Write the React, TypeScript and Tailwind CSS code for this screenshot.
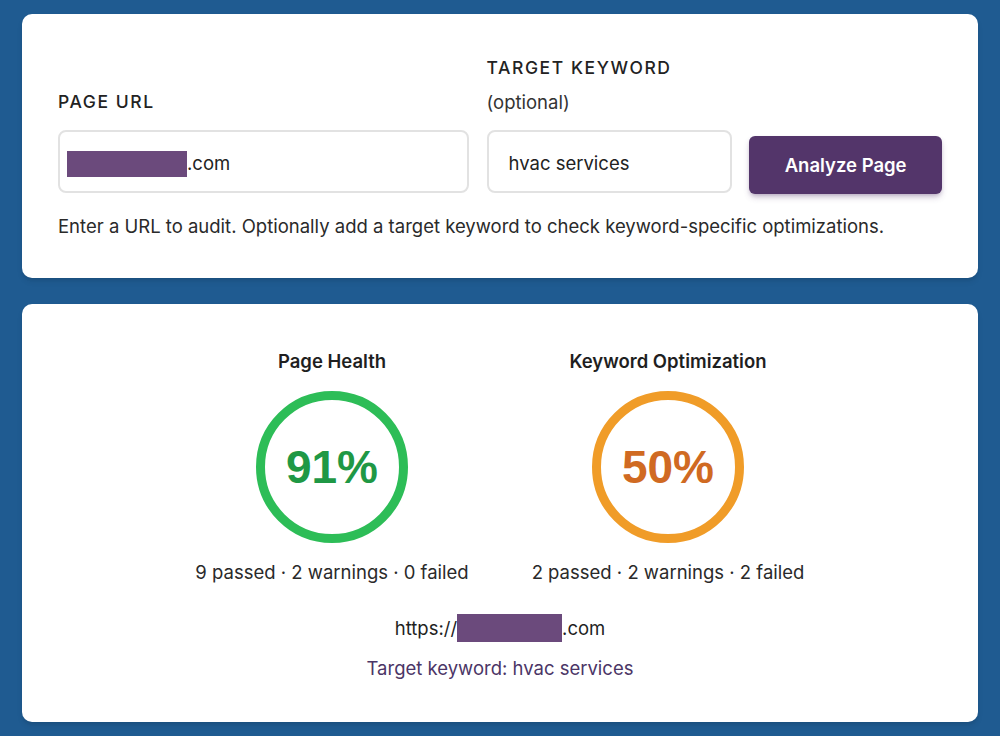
import React from 'react';

// --- Score ring ---
const ScoreRing = ({ title, score, stats, ring, text }: { title: string, score: string, stats: string, ring: string, text: string }) => (
  <div className="flex w-[300px] flex-col items-center">
    <h3 className="text-[18.5px] font-semibold leading-6 text-[#1f1f1f]">{title}</h3>
    <div className={`mt-[18px] flex h-[152px] w-[152px] items-center justify-center rounded-full border-[9px] ${ring}`}>
      <span className={`font-['Liberation_Sans',Arial,sans-serif] text-[46px] font-bold leading-none ${text}`}>{score}</span>
    </div>
    <p className="mt-[17px] text-[18.5px] leading-6 text-[#2a2a2a]">{stats}</p>
  </div>
);

export default function App() {
  return (
    <div className="min-h-[736px] bg-[#1f5b91] px-[22px] pt-[14px] pb-4 font-['Inter','Noto_Sans',sans-serif]">
      {/* --- Audit form --- */}
      <div className="rounded-[10px] bg-white px-9 pt-[42px] pb-[40px] shadow-md">
        <div className="flex items-end">
          <div className="w-[411px]">
            <label className="block text-[17.5px] font-medium uppercase leading-6 tracking-[0.09em] text-[#222]">Page URL</label>
            <div className="mt-[16px] flex h-[63px] items-center rounded-lg border-2 border-[#e2e2e2] pt-[4px] pl-[7px] text-[18.5px] text-[#222]">
              <span className="h-[26px] w-[120px] bg-[#6b4a7c]" />
              <span>.com</span>
            </div>
          </div>
          <div className="ml-[18px] w-[246px]">
            <label className="block text-[17.5px] font-medium uppercase leading-6 tracking-[0.09em] text-[#222]">Target Keyword</label>
            <span className="mt-[10px] block text-[18.5px] leading-6 text-[#333]">(optional)</span>
            <input
              readOnly
              value="hvac services"
              className="mt-[16px] h-[63px] w-full rounded-lg border-2 border-[#e2e2e2] px-[20px] pt-[3px] text-[18.5px] text-[#222] outline-none"
            />
          </div>
          <button className="mb-[-1px] ml-[17px] h-[58px] w-[193px] rounded-md bg-[#53356a] pt-[2px] text-[18.5px] font-semibold text-white shadow-md shadow-[#53356a]/30">
            Analyze Page
          </button>
        </div>
        <p className="mt-[21px] text-[18.5px] leading-6 text-[#2a2a2a]">
          Enter a URL to audit. Optionally add a target keyword to check keyword-specific optimizations.
        </p>
      </div>

      {/* --- Results --- */}
      <div className="mt-[26px] rounded-[10px] bg-white pt-[45px] pb-[42px] shadow-md">
        <div className="flex justify-center gap-9">
          <ScoreRing title="Page Health" score="91%" stats="9 passed · 2 warnings · 0 failed" ring="border-[#2dbd57]" text="text-[#1f9845]" />
          <ScoreRing title="Keyword Optimization" score="50%" stats="2 passed · 2 warnings · 2 failed" ring="border-[#f09c28]" text="text-[#d06a22]" />
        </div>
        <div className="mt-[30px] flex items-center justify-center text-[18.5px] leading-6 text-[#1f1f1f]">
          <span>https://</span>
          <span className="h-[28px] w-[105px] bg-[#6b4a7c]" />
          <span>.com</span>
        </div>
        <p className="mt-[14px] text-center text-[18.5px] leading-6 text-[#4b3566]">Target keyword: hvac services</p>
      </div>
    </div>
  );
}
